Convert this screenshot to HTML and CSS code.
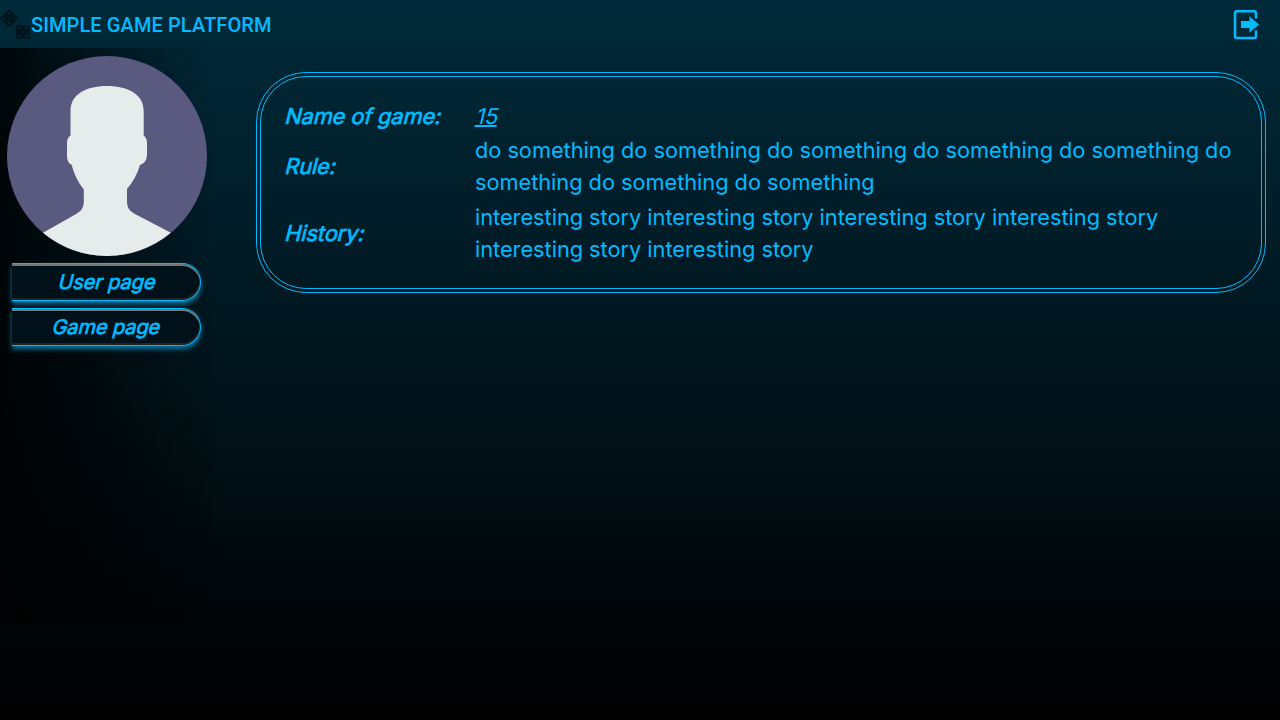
FILE: index.html
```html
<!DOCTYPE html>
<html lang="en">
<head>
<meta charset="utf-8">
<title>Simple Game Platform</title>
<link rel="stylesheet" href="styles.css">
</head>
<body>
<header class="header">
  <div class="brand">
    <svg class="dice" viewBox="0 0 31 32" width="31" height="32">
      <rect x="2.7" y="3.7" width="13.2" height="13.2" rx="1.8" transform="rotate(45 9.3 10.3)"/>
      <rect x="16" y="17" width="14" height="14" rx="1.5"/>
      <g class="pips"><circle cx="9.3" cy="5.2" r="1.1"/><circle cx="4.3" cy="10.3" r="1.1"/><circle cx="9.3" cy="10.3" r="1.1"/><circle cx="14.3" cy="10.3" r="1.1"/><circle cx="9.3" cy="15.4" r="1.1"/><circle cx="19.3" cy="20.3" r="1.1"/><circle cx="26.7" cy="20.3" r="1.1"/><circle cx="23" cy="24" r="1.1"/><circle cx="19.3" cy="27.7" r="1.1"/><circle cx="26.7" cy="27.7" r="1.1"/></g>
    </svg>
    <span class="title">SIMPLE GAME PLATFORM</span>
  </div>
  <a class="logout" aria-label="Log out">
    <svg viewBox="0 0 26 30" width="26" height="30">
      <path class="door" d="M23 8.500V3.200Q23 1.200 21 1.200H4Q2 1.200 2 3.200V26Q2 28 4 28H21Q23 28 23 26V20.500"/>
      <path class="arrow" d="M8 11H16.400V6.300L26 14.500L16.400 22.700V18H8Z"/>
    </svg>
  </a>
</header>
<div class="layout">
  <aside class="sidebar">
    <svg class="avatar" viewBox="0 0 200 200" width="200" height="200">
      <circle cx="100" cy="100" r="100" fill="#5a5a80"/>
      <path fill="#e6ecec" d="M36 176.800L70 157.500Q76.800 153.500 76.800 146V133.500C71 126 66.500 117 64.800 109C61.500 107.500 60 103.500 60 100V87C60 83 61.500 81 63.500 79.500V55C63.500 39 78 30 100 30S136.700 39 136.700 55V79.500C138.500 81 140 83 140 87V98C140 104 137.500 107.500 133 109C130.500 118 126 126 120 133V146Q120 153.500 127 157.500L163.800 176.800A100 100 0 0 1 36 176.800Z"/>
    </svg>
    <nav class="menu">
      <a class="menu-item"><span class="slanted bold">User page</span></a>
      <a class="menu-item"><span class="slanted bold">Game page</span></a>
    </nav>
  </aside>
  <main class="content">
    <section class="card">
      <dl class="details">
        <dt class="slanted bold first">Name of game:</dt><dd class="slanted name first">15</dd>
        <dt class="slanted bold">Rule:</dt><dd>do something do something do something do something do something do something do something do something</dd>
        <dt class="slanted bold">History:</dt><dd>interesting story interesting story interesting story interesting story interesting story interesting story</dd>
      </dl>
    </section>
  </main>
</div>
</body>
</html>
```
FILE: styles.css
```css
* { box-sizing: border-box; }
body {
  margin: 0;
  min-height: 100vh;
  overflow: hidden;
  background: linear-gradient(#002a3a, #000);
  color: #00bbff;
  font-family: Inter, "Liberation Sans", sans-serif;
}
.header {
  height: 48px;
  display: flex;
  justify-content: space-between;
  padding-right: 21px;
}
.brand { display: flex; align-items: center; }
.dice { fill: #00151d; }
.pips { fill: #002b3a; }
.title {
  font: 500 20px/30px Roboto, sans-serif;
  letter-spacing: .1px;
  padding-top: 2px;
}
.logout { padding-top: 10px; }
.door { fill: none; stroke: #00bbff; stroke-width: 2.5; }
.arrow { fill: #00bbff; }
.layout { display: flex; }
.sidebar {
  width: 213.33px;
  height: 576px;
  padding: 8px 0 0 7px;
  background:
    linear-gradient(transparent, rgba(0, 0, 0, .12)),
    linear-gradient(to right, rgba(0, 0, 0, .82), transparent);
}
.avatar { display: block; }
.menu {
  display: flex;
  flex-direction: column;
  gap: 7px;
  padding: 7px 0 0 5px;
}
.menu-item {
  width: 189px;
  height: 38px;
  border: solid #00bbff;
  border-width: 1px 1px 1px 0;
  border-radius: 0 19px 19px 0;
  background: #001119;
  box-shadow: inset -1px -2px 0 #222, inset 0 2px 0 #777, 0 3px 5px #007baa;
  text-align: center;
  font-size: 20px;
  line-height: 36px;
}
.slanted { display: inline-block; transform: translateX(1px) skewX(-14deg); }
.bold { -webkit-text-stroke: .7px #00bbff; letter-spacing: -.1px; }
.content { flex: 1; padding: 24px 14px 0 42.67px; }
.card {
  height: 221px;
  border: 1px solid #00bbff;
  border-radius: 50px;
  padding: 3px;
}
.details {
  height: 100%;
  margin: 0;
  border: 1px solid #00bbff;
  border-radius: 46px;
  padding: 23px 24px;
  display: grid;
  grid-template-columns: 190px 1fr;
  row-gap: 3px;
  align-items: center;
  align-content: start;
  font-size: 21.75px;
  letter-spacing: -.02px;
  line-height: 32px;
}
.details dt, .details .name { justify-self: start; }
.details dd { margin: 0; }
.details .first { margin-bottom: -1px; }
.details .name {
  transform: translateX(2px) skewX(-14deg);
  text-decoration: underline;
  text-decoration-thickness: 2px;
}
```
